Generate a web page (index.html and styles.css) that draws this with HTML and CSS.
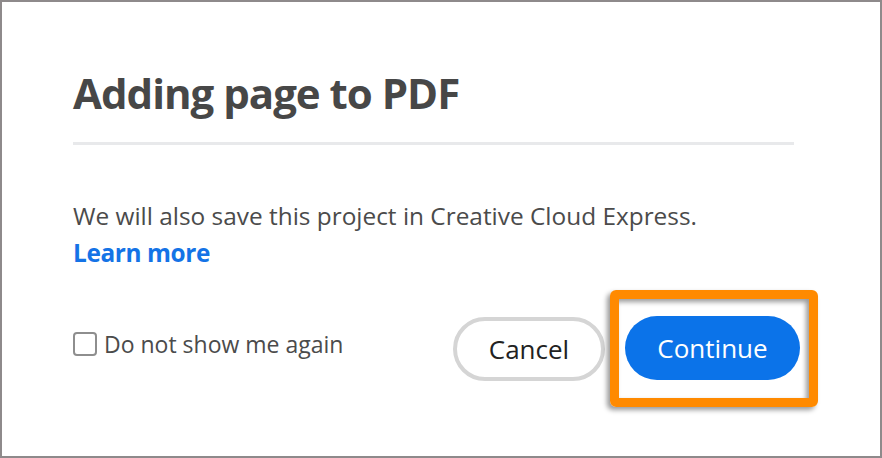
FILE: index.html
```html
<!DOCTYPE html>
<html>
<head>
<meta charset="utf-8">
<link rel="stylesheet" href="styles.css">
</head>
<body>
<div class="frame">
  <div class="dialog">
    <h1 class="title">Adding page to PDF</h1>
    <div class="divider"></div>
    <p class="body-text">We will also save this project in Creative Cloud Express.</p>
    <a class="learn" href="#">Learn more</a>
    <div class="footer">
      <label class="check">
        <span class="box"></span>
        <span class="check-label">Do not show me again</span>
      </label>
      <div class="actions">
        <button class="btn btn-cancel">Cancel</button>
        <div class="highlight">
          <button class="btn btn-primary">Continue</button>
        </div>
      </div>
    </div>
  </div>
</div>
</body>
</html>
```

FILE: styles.css
```css
html, body {
  margin: 0;
  padding: 0;
  background: #fff;
}
.frame {
  box-sizing: border-box;
  width: 882px;
  height: 458px;
  border: 2px solid #8e8a8b;
  background: #fff;
  font-family: "Open Sans", "Noto Sans", sans-serif;
  color: #4b4b4b;
}
.dialog {
  padding: 0 86px 0 71px;
  display: flex;
  flex-direction: column;
}
.title {
  margin: 66px 0 0;
  font-size: 42px;
  line-height: 50px;
  font-weight: 700;
  color: #474747;
  letter-spacing: -1px;
}
.divider {
  margin-top: 24px;
  height: 3px;
  background: #e8e9eb;
}
.body-text {
  margin: 53px 0 0;
  font-size: 24.4px;
  line-height: 36px;
  color: #4b4b4b;
}
.learn {
  align-self: flex-start;
  font-size: 24.4px;
  line-height: 38px;
  font-weight: 700;
  color: #1473e6;
  text-decoration: none;
  letter-spacing: -0.4px;
}
.footer {
  margin-top: 18px;
  margin-right: -24px;
  display: flex;
  align-items: center;
  justify-content: space-between;
}
.check {
  display: flex;
  align-items: center;
  gap: 7px;
  margin-bottom: 10px;
  font-size: 23px;
  color: #4b4b4b;
}
.box {
  box-sizing: border-box;
  width: 24px;
  height: 24px;
  border: 2px solid #8e8e8e;
  border-radius: 4px;
}
.actions {
  display: flex;
  align-items: center;
  gap: 5px;
}
.btn {
  box-sizing: border-box;
  height: 64px;
  border-radius: 32px;
  font-family: inherit;
  font-size: 26px;
  padding: 0;
}
.btn-cancel {
  width: 152px;
  border: 4px solid #d5d5d5;
  background: #fff;
  color: #222;
}
.highlight {
  border: 9px solid #ff8a00;
  border-radius: 6px;
  padding: 17px 9px 18px 6px;
  box-shadow: -3px 3px 5px rgba(0,0,0,.4), inset -3px 3px 5px rgba(0,0,0,.4);
}
.btn-primary {
  width: 175px;
  border: none;
  background: #0b73e9;
  color: #fff;
}
```
